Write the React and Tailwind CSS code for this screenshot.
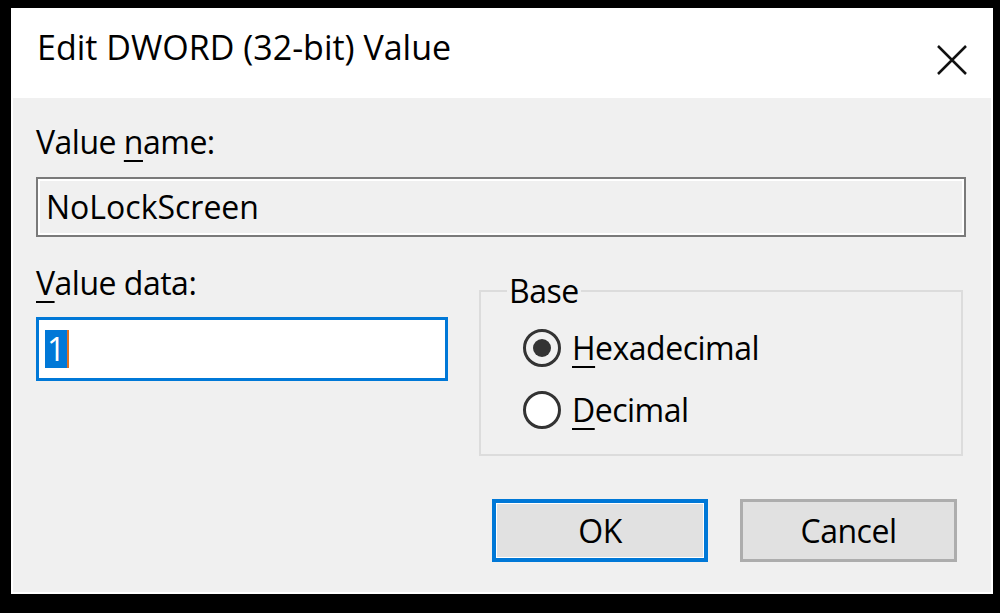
const font = { fontFamily: '"Open Sans", "Noto Sans", sans-serif' };

const Radio = ({ checked }) => (
    <div className={`w-[38px] h-[38px] rounded-full border-[3px] border-[#333333] flex items-center justify-center ${checked ? 'bg-[#f0f0f0]' : 'bg-white'}`}>
        {checked && <div className="w-[18px] h-[18px] rounded-full bg-[#333333]"></div>}
    </div>
);

const App = () => {
    return (
        <div className="w-[1000px] h-[613px] bg-black pt-[8px] pl-[11px] overflow-hidden" style={font}>
            <div className="w-[982px] h-[586px] border-2 border-white bg-[#f0f0f0] flex flex-col text-[32px] leading-[40px] tracking-[-0.5px] text-black">
                <div className="h-[88px] bg-white flex items-start justify-between pl-[24px] pr-[24px] pt-[17px]">
                    <span className="text-[34px] tracking-normal">Edit DWORD (32-bit) Value</span>
                    <svg className="mt-[18px]" width="30" height="30" viewBox="0 0 30 30">
                        <path d="M1 1 L29 29 M29 1 L1 29" stroke="#111" strokeWidth="2.5" fill="none" />
                    </svg>
                </div>

                <div className="flex flex-col pl-[23px] pr-[24px]">
                    <label className="mt-[24px]">
                        Value <u className="decoration-2 underline-offset-[6px]">n</u>ame:
                    </label>
                    <div className="mt-[15px] w-[930px] h-[60px] border-2 border-[#7a7a7a] shadow-[inset_0_0_0_2px_#ffffff] bg-[#f0f0f0] flex items-center pl-[8px] tracking-normal">
                        NoLockScreen
                    </div>

                    <div className="mt-[26px] flex items-start gap-[31px]">
                        <div className="w-[412px] flex flex-col">
                            <label>
                                <u className="decoration-2 underline-offset-[6px]">V</u>alue data:
                            </label>
                            <div className="mt-[14px] h-[64px] border-[3px] border-[#0078d7] bg-white flex items-center pl-[6px]">
                                <span className="bg-[#0078d7] text-white px-[2px] leading-[38px]">1</span>
                                <span className="w-[2px] h-[38px] bg-[#e07020]"></span>
                            </div>
                        </div>

                        <fieldset className="mt-[8px] w-[484px] border-2 border-[#dcdcdc] pb-[24px]">
                            <legend className="ml-[26px] px-[2px]">Base</legend>
                            <div className="pl-[42px]">
                                <div className="mt-[17px] flex items-center gap-[11px]">
                                    <Radio checked />
                                    <span><u className="decoration-2 underline-offset-[6px]">H</u>exadecimal</span>
                                </div>
                                <div className="mt-[22px] flex items-center gap-[11px]">
                                    <Radio />
                                    <span><u className="decoration-2 underline-offset-[6px]">D</u>ecimal</span>
                                </div>
                            </div>
                        </fieldset>
                    </div>

                    <div className="mt-[43px] flex justify-end gap-[32px] pr-[10px]">
                        <button className="w-[216px] h-[63px] border-[4px] border-[#0078d7] shadow-[inset_0_0_0_1px_#ffffff] bg-[#e1e1e1]">
                            OK
                        </button>
                        <button className="w-[217px] h-[63px] border-[3px] border-[#adadad] bg-[#e1e1e1]">
                            Cancel
                        </button>
                    </div>
                </div>
            </div>
        </div>
    );
};

export default App;
